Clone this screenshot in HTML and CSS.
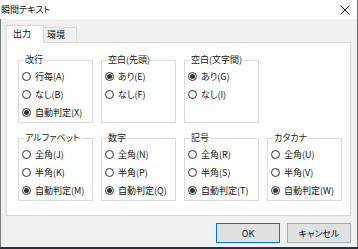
FILE: index.html
```html
<!DOCTYPE html>
<html lang="ja">
<head>
    <meta charset="UTF-8">
    <title>瞬間テキスト</title>
    <link rel="stylesheet" href="styles.css">
</head>
<body>
    <div class="window">
        <div class="titlebar">
            <span class="title">瞬間テキスト</span>
            <svg class="close" width="10" height="10" viewBox="0 0 10 10">
                <path d="M0.5 0.5L9.5 9.5M9.5 0.5L0.5 9.5" stroke="#111" stroke-width="1" fill="none"/>
            </svg>
        </div>
        <div class="client">
            <div class="tabs">
                <div class="tab active">出力</div>
                <div class="tab">環境</div>
            </div>
            <div class="panel">
                <div class="groups">
                    <fieldset class="group">
                        <legend>改行</legend>
                        <div class="opt"><span class="radio"></span>行毎(A)</div>
                        <div class="opt"><span class="radio"></span>なし(B)</div>
                        <div class="opt"><span class="radio checked"></span>自動判定(X)</div>
                    </fieldset>
                    <fieldset class="group">
                        <legend>空白(先頭)</legend>
                        <div class="opt"><span class="radio checked"></span>あり(E)</div>
                        <div class="opt"><span class="radio"></span>なし(F)</div>
                    </fieldset>
                    <fieldset class="group">
                        <legend>空白(文字間)</legend>
                        <div class="opt"><span class="radio checked"></span>あり(G)</div>
                        <div class="opt"><span class="radio"></span>なし(I)</div>
                    </fieldset>
                    <div class="spacer"></div>

                    <fieldset class="group">
                        <legend>アルファベット</legend>
                        <div class="opt"><span class="radio"></span>全角(J)</div>
                        <div class="opt"><span class="radio"></span>半角(K)</div>
                        <div class="opt"><span class="radio checked"></span>自動判定(M)</div>
                    </fieldset>
                    <fieldset class="group">
                        <legend>数字</legend>
                        <div class="opt"><span class="radio"></span>全角(N)</div>
                        <div class="opt"><span class="radio"></span>半角(P)</div>
                        <div class="opt"><span class="radio checked"></span>自動判定(Q)</div>
                    </fieldset>
                    <fieldset class="group">
                        <legend>記号</legend>
                        <div class="opt"><span class="radio"></span>全角(R)</div>
                        <div class="opt"><span class="radio"></span>半角(S)</div>
                        <div class="opt"><span class="radio checked"></span>自動判定(T)</div>
                    </fieldset>
                    <fieldset class="group">
                        <legend>カタカナ</legend>
                        <div class="opt"><span class="radio"></span>全角(U)</div>
                        <div class="opt"><span class="radio"></span>半角(V)</div>
                        <div class="opt"><span class="radio checked"></span>自動判定(W)</div>
                    </fieldset>
                </div>
            </div>
            <div class="buttons">
                <button class="btn default">OK</button>
                <button class="btn">キャンセル</button>
            </div>
        </div>
    </div>
</body>
</html>
```

FILE: styles.css
```css
body {
    margin: 0;
    padding: 0;
    width: 358px;
    height: 249px;
    overflow: hidden;
    background-color: #23343f;
    font-family: "Noto Sans CJK JP", "Noto Sans", sans-serif;
    font-size: 9px;
    font-feature-settings: "palt";
    color: #111;
}
.window {
    width: 358px;
    height: 247px;
    box-sizing: border-box;
    border-right: 1px solid #6f6f6f;
    display: flex;
    flex-direction: column;
}
.titlebar {
    height: 19px;
    background-color: #fff;
    display: flex;
    align-items: center;
    justify-content: space-between;
    padding: 0 7px 0 1px;
    flex-shrink: 0;
}
.title {
    line-height: 12px;
}
.close {
    display: block;
}
.client {
    flex: 1;
    background-color: #f0f0f0;
    border-left: 1px solid #7c7c7c;
    padding: 6px 6px 0 5px;
    display: flex;
    flex-direction: column;
}
.tabs {
    display: flex;
    align-items: flex-start;
    height: 18px;
    margin-bottom: -1px;
}
.tab {
    box-sizing: border-box;
    height: 15px;
    margin-top: 2px;
    line-height: 13px;
    padding: 0 11px 0 3px;
    border: 1px solid #d9d9d9;
    border-left: none;
    border-bottom: none;
    background-color: #f0f0f0;
}
.tab.active {
    position: relative;
    height: 18px;
    margin-top: 0;
    line-height: 16px;
    padding: 0 12px 0 6px;
    border-left: 1px solid #d9d9d9;
    background-color: #fff;
}
.panel {
    box-sizing: border-box;
    height: 174px;
    background-color: #fff;
    border: 1px solid #d9d9d9;
    padding: 11px 0 0 11px;
}
.groups {
    display: grid;
    grid-template-columns: repeat(4, 75px);
    column-gap: 8px;
    row-gap: 9px;
}
.group {
    margin: 0;
    min-width: 0;
    padding: 1px 0 1px 3px;
    border: 1px solid #dcdcdc;
}
.group legend {
    padding: 0 1px;
    margin-left: 2px;
    line-height: 12px;
    color: #222;
}
.opt {
    height: 18px;
    display: flex;
    align-items: center;
    gap: 4px;
    white-space: nowrap;
}
.radio {
    box-sizing: border-box;
    width: 9px;
    height: 9px;
    border: 1px solid #333;
    border-radius: 50%;
    background-color: #fff;
    display: inline-flex;
    align-items: center;
    justify-content: center;
    flex-shrink: 0;
}
.radio.checked::after {
    content: "";
    width: 5px;
    height: 5px;
    border-radius: 50%;
    background-color: #333;
}
.buttons {
    display: flex;
    justify-content: flex-end;
    gap: 7px;
    margin-top: 7px;
}
.btn {
    width: 64px;
    height: 20px;
    margin: 0;
    padding: 0;
    font-family: inherit;
    font-size: 9px;
    font-feature-settings: "palt";
    color: #111;
    background-color: #e1e1e1;
    border: 1px solid #adadad;
}
.btn.default {
    border-color: #0078d7;
}
```
